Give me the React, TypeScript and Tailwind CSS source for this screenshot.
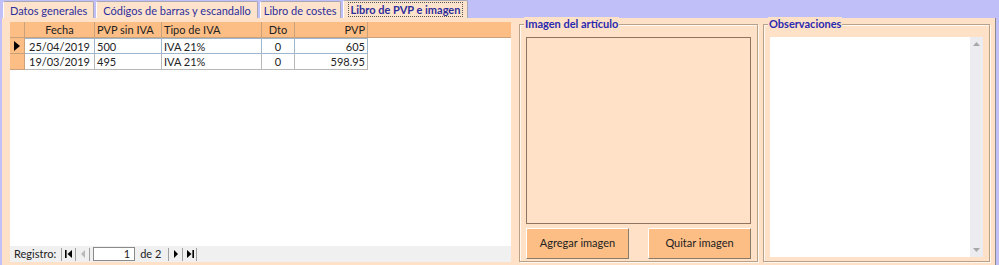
import React from "react";

const F = { fontFamily: 'Lato, "Liberation Sans", sans-serif' };

function Tab({ label, active, pad }: { label: string; active?: boolean; pad?: string }) {
  return (
    <div
      className={
        "h-[17px] flex items-center text-[11px] text-[#2e2e9c] bg-[#fde3cb] border border-b-0 border-[#a8a8b4] border-l-white rounded-t-[2px] " +
        (pad || "px-[6px]") +
        (active ? " font-bold h-[18px]" : "")
      }
    >
      {active ? (
        <span className="border border-dotted border-[#555] px-[2px] leading-[13px]">{label}</span>
      ) : (
        <span className="leading-[13px]">{label}</span>
      )}
    </div>
  );
}

const cols = [
  { w: 70, align: "text-center" },
  { w: 67, align: "text-left pl-[2px]" },
  { w: 100, align: "text-left pl-[2px]" },
  { w: 33, align: "text-center" },
  { w: 73, align: "text-right pr-[2px]" },
];

function Row({ data, current }: { data: string[]; current?: boolean }) {
  return (
    <div className="flex h-[16px]">
      <div className="w-[15px] bg-[#fdbe85] border-r border-b border-[#c9a27c] flex items-center justify-center">
        {current && (
          <svg width="6" height="10" viewBox="0 0 6 10">
            <path d="M0 0 L6 5 L0 10 Z" fill="#000" />
          </svg>
        )}
      </div>
      {data.map((d, i) => (
        <div
          key={i}
          style={{ width: cols[i].w }}
          className={
            "text-[11px] leading-[15px] text-[#222] border-r border-b " +
            cols[i].align +
            (current ? " border-[#9fb6cf] border-t border-t-[#9fb6cf] leading-[14px]" : " border-[#b8b8b8]")
          }
        >
          {d}
        </div>
      ))}
    </div>
  );
}

function NavBtn({ children }: { children: React.ReactNode }) {
  return (
    <div className="w-[14px] h-[13px] bg-[#f0f0f0] border-r border-[#a0a0a0] flex items-center justify-center">
      {children}
    </div>
  );
}

export default function App() {
  return (
    <div style={F} className="w-[999px] h-[265px] bg-[#c0bff7] flex flex-col overflow-hidden">
      <div className="h-[18px] flex items-end pl-[3px] gap-[2px] shrink-0">
        <Tab label="Datos generales" pad="px-[6px]" />
        <Tab label="Códigos de barras y escandallo" pad="px-[6px]" />
        <Tab label="Libro de costes" pad="px-[3px]" />
        <Tab label="Libro de PVP e imagen" active pad="px-[4px]" />
      </div>
      <div className="flex-1 bg-[#fee1c6] ml-[2px] mr-[3px] border-r border-b-2 border-[#8a8a8a] flex pl-[8px] pt-[4px] pb-[3px] gap-[8px]">
        {/* datasheet */}
        <div className="w-[501px] bg-white flex flex-col">
          <div className="flex h-[16px] bg-[#fdbe85] border-b border-[#c9a27c]">
            <div className="w-[15px] border-r border-[#c9a27c]" />
            {["Fecha", "PVP sin IVA", "Tipo de IVA", "Dto", "PVP"].map((h, i) => (
              <div
                key={h}
                style={{ width: cols[i].w }}
                className={"text-[11px] leading-[15px] text-[#222] border-r border-[#c9a27c] " + cols[i].align}
              >
                {h}
              </div>
            ))}
          </div>
          <Row data={["25/04/2019", "500", "IVA 21%", "0", "605"]} current />
          <Row data={["19/03/2019", "495", "IVA 21%", "0", "598.95"]} />
          <div className="flex-1" />
          <div className="h-[16px] bg-[#f0f0f0] flex items-center pl-[4px] text-[11px] text-[#222]">
            <span className="mr-[5px]">Registro:</span>
            <div className="flex border-l border-[#a0a0a0]">
              <NavBtn>
                <svg width="8" height="8" viewBox="0 0 8 8">
                  <rect x="0" y="0" width="1.6" height="8" fill="#000" />
                  <path d="M7 0 L2.5 4 L7 8 Z" fill="#000" />
                </svg>
              </NavBtn>
              <NavBtn>
                <svg width="6" height="8" viewBox="0 0 6 8">
                  <path d="M5 0 L1 4 L5 8 Z" fill="#b8b8b8" />
                </svg>
              </NavBtn>
            </div>
            <div className="w-[42px] h-[14px] bg-white border border-[#8a8a8a] ml-[3px] text-right pr-[4px] leading-[12px]">
              1
            </div>
            <span className="ml-[5px] mr-[7px]">de 2</span>
            <div className="flex border-l border-[#a0a0a0]">
              <NavBtn>
                <svg width="6" height="8" viewBox="0 0 6 8">
                  <path d="M1 0 L5 4 L1 8 Z" fill="#000" />
                </svg>
              </NavBtn>
              <NavBtn>
                <svg width="8" height="8" viewBox="0 0 8 8">
                  <path d="M1 0 L5.5 4 L1 8 Z" fill="#000" />
                  <rect x="6.4" y="0" width="1.6" height="8" fill="#000" />
                </svg>
              </NavBtn>
            </div>
          </div>
        </div>
        {/* image group */}
        <div className="w-[239px] relative mt-[2px] border border-[#b9a089] shadow-[inset_1px_1px_0_#fff8f0,1px_1px_0_#fff8f0] flex flex-col px-[6px] pt-[12px] pb-[2px]">
          <span className="absolute left-[4px] top-[-8px] bg-[#fee1c6] px-[1px] text-[11px] font-bold text-[#2a2ab0] leading-[13px]">
            Imagen del artículo
          </span>
          <div className="h-[187px] border border-[#8f7560] bg-[#fee1c6]" />
          <div className="flex justify-between mt-[4px]">
            <button className="w-[103px] h-[31px] bg-[#fdbe85] border border-[#fff] border-r-[#8a7a6a] border-b-[#8a7a6a] text-[11px] text-[#222]">
              Agregar imagen
            </button>
            <button className="w-[103px] h-[31px] bg-[#fdbe85] border border-[#fff] border-r-[#8a7a6a] border-b-[#8a7a6a] text-[11px] text-[#222]">
              Quitar imagen
            </button>
          </div>
        </div>
        {/* observaciones */}
        <div className="w-[227px] relative mt-[2px] ml-[-3px] border border-[#b9a089] shadow-[inset_1px_1px_0_#fff8f0,1px_1px_0_#fff8f0] flex flex-col px-[6px] pt-[12px] pb-[4px]">
          <span className="absolute left-[4px] top-[-8px] bg-[#fee1c6] px-[1px] text-[11px] font-bold text-[#2a2ab0] leading-[13px]">
            Observaciones
          </span>
          <div className="flex-1 bg-white flex justify-end">
            <div className="w-[13px] bg-[#ececf0] flex flex-col justify-between items-center py-[5px]">
              <svg width="7" height="4" viewBox="0 0 7 4">
                <path d="M0 4 L3.5 0 L7 4 Z" fill="#a8a8a8" />
              </svg>
              <svg width="7" height="4" viewBox="0 0 7 4">
                <path d="M0 0 L3.5 4 L7 0 Z" fill="#a8a8a8" />
              </svg>
            </div>
          </div>
        </div>
      </div>
    </div>
  );
}
